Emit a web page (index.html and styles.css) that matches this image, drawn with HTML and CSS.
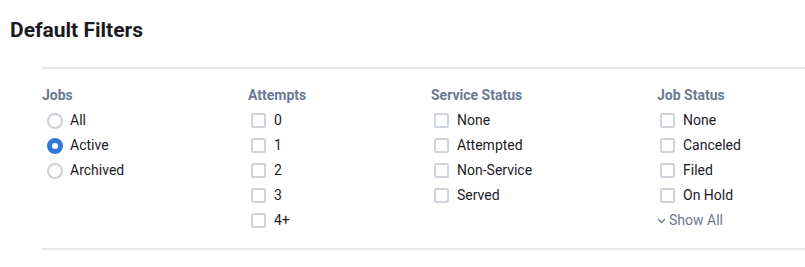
FILE: index.html
```html
<!DOCTYPE html>
<html>
	<head>
		<meta charset="UTF-8">
		<title>Default Filters</title>
		<link rel="stylesheet" href="styles.css">
	</head>
	<body>
		<h2 class="title">Default Filters</h2>
		<div class="filters">
			<div class="col">
				<div class="col_head">Jobs</div>
				<label class="opt"><span class="radio"></span>All</label>
				<label class="opt"><span class="radio checked"></span>Active</label>
				<label class="opt"><span class="radio"></span>Archived</label>
			</div>
			<div class="col">
				<div class="col_head">Attempts</div>
				<label class="opt"><span class="check"></span>0</label>
				<label class="opt"><span class="check"></span>1</label>
				<label class="opt"><span class="check"></span>2</label>
				<label class="opt"><span class="check"></span>3</label>
				<label class="opt"><span class="check"></span>4+</label>
			</div>
			<div class="col">
				<div class="col_head">Service Status</div>
				<label class="opt"><span class="check"></span>None</label>
				<label class="opt"><span class="check"></span>Attempted</label>
				<label class="opt"><span class="check"></span>Non-Service</label>
				<label class="opt"><span class="check"></span>Served</label>
			</div>
			<div class="col">
				<div class="col_head">Job Status</div>
				<label class="opt"><span class="check"></span>None</label>
				<label class="opt"><span class="check"></span>Canceled</label>
				<label class="opt"><span class="check"></span>Filed</label>
				<label class="opt"><span class="check"></span>On Hold</label>
				<a class="show_all" href="#">
					<svg width="9" height="6" viewBox="0 0 9 6"><path d="M1 1l3.5 3.5L8 1" fill="none" stroke="#6b7894" stroke-width="1.3"/></svg>
					Show All
				</a>
			</div>
		</div>
	</body>
</html>
```

FILE: styles.css
```css
*{
	margin: 0;
	padding: 0;
	box-sizing: border-box;
}
body{
	font-family: Roboto, "Liberation Sans", sans-serif;
	color: #1b1b1f;
	background: #fff;
}
.title{
	font-size: 21px;
	font-weight: 700;
	line-height: 24px;
	padding: 18px 0 0 10px;
}
.filters{
	margin: 25px 0 0 42px;
	border-top: 2px solid #e7e7ec;
	border-bottom: 2px solid #e7e7ec;
	padding: 14px 0 15px;
	display: grid;
	grid-template-columns: 206px 183px 226px 1fr;
}
.col{
	display: flex;
	flex-direction: column;
}
.col_head{
	font-size: 14px;
	font-weight: 700;
	color: #6b7894;
	line-height: 25px;
}
.opt{
	display: flex;
	align-items: center;
	gap: 7px;
	font-size: 14px;
	line-height: 25px;
	cursor: pointer;
}
.radio{
	width: 16px;
	height: 16px;
	margin-left: 5px;
	border: 2px solid #cdd1da;
	border-radius: 50%;
}
.radio.checked{
	border: 5px solid #2f7bd6;
	background: #fff;
}
.check{
	width: 15px;
	height: 15px;
	margin-left: 3px;
	margin-right: 1px;
	border: 2px solid #cfd3dc;
	border-radius: 2px;
}
.show_all{
	display: flex;
	align-items: center;
	gap: 3px;
	font-size: 14px;
	line-height: 25px;
	color: #6b7894;
	text-decoration: none;
}
```
